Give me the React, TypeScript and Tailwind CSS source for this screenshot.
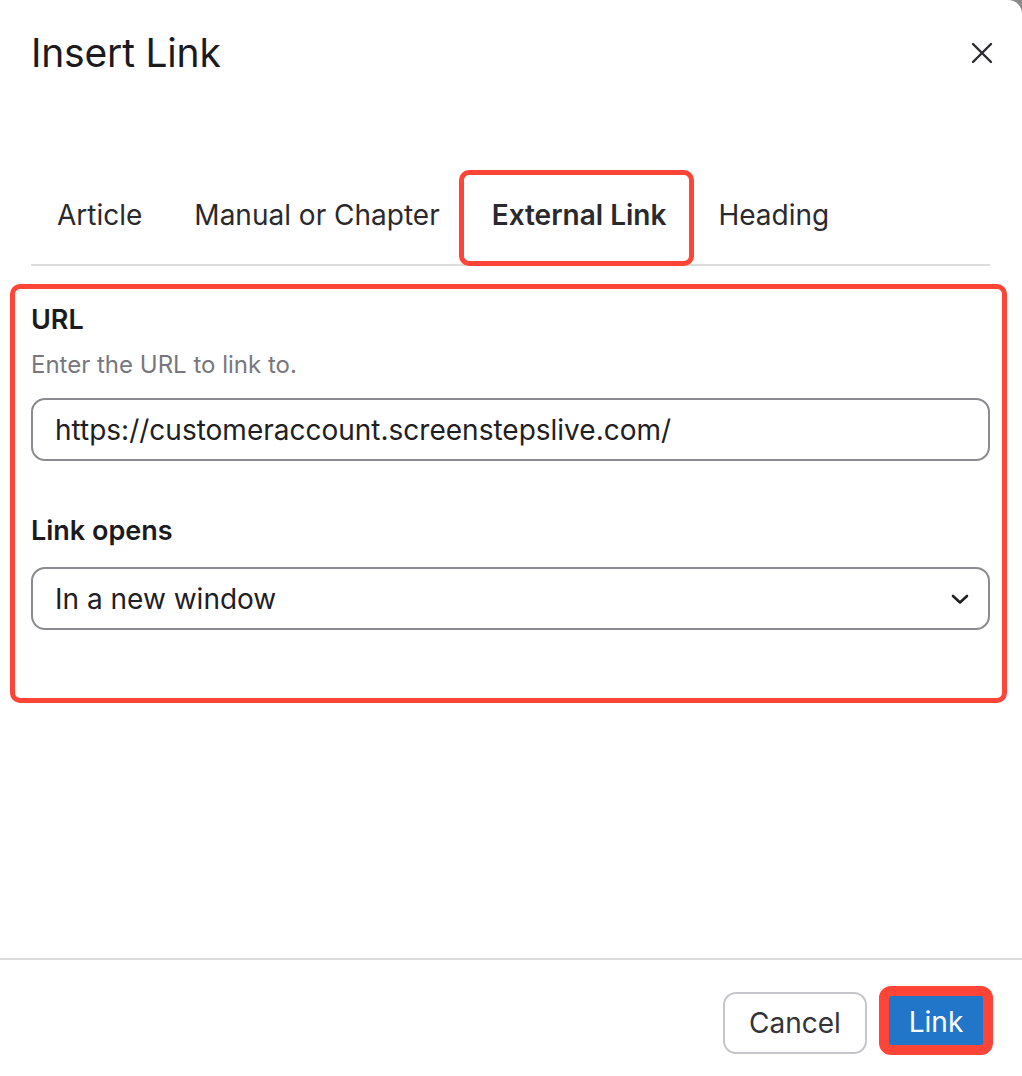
const tabs = ["Article", "Manual or Chapter", "External Link", "Heading"];

export default function App() {
  return (
    <div className="w-[1022px] h-[1076px] bg-[#8c8c8c]" style={{ fontFamily: "Inter, 'Noto Sans', sans-serif" }}>
      <div className="w-full h-full bg-white rounded-tr-[14px] flex flex-col">
        {/* header */}
        <div className="flex items-center justify-between pl-[31px] pr-[28px] pt-[30px] h-[75px]">
          <h2 className="text-[39px] leading-[44px] font-normal text-[#1b1b1f] tracking-[-0.2px]">Insert Link</h2>
          <button type="button" className="w-[24px] h-[24px] flex items-center justify-center text-[#2a2a30]">
            <svg width="22" height="22" viewBox="0 0 22 22" fill="none" stroke="currentColor" strokeWidth="2.4" strokeLinecap="round">
              <path d="M2 2 L20 20 M20 2 L2 20" />
            </svg>
          </button>
        </div>

        {/* tabs */}
        <div className="mt-[95px] ml-[31px] mr-[32px] flex border-b-2 border-[#dcdcdc]">
          {tabs.map((t) => {
            const active = t === "External Link";
            return (
              <div
                key={t}
                className={
                  active
                    ? "relative px-[26px] pt-[29px] pb-[33px] text-[28px] leading-[32px] font-semibold text-[#2a2a2e]"
                    : "relative px-[26px] pt-[29px] pb-[33px] text-[28px] leading-[32px] font-normal text-[#2a2a2e]"
                }
              >
                {t}
                {active && (
                  <div className="absolute left-[-7px] right-[-2px] top-0 bottom-[-2px] border-[5px] border-[#ff4438] rounded-[10px]" />
                )}
              </div>
            );
          })}
        </div>

        {/* panel */}
        <div className="mt-[18px] ml-[10px] w-[997px] h-[419px] border-[5px] border-[#ff4438] rounded-[10px] pl-[16px] pr-[12px] pt-[16px]">
          <label className="block text-[27px] leading-[30px] font-semibold text-[#1a1a1f]">URL</label>
          <p className="mt-[16px] text-[24px] leading-[28px] text-[#77777d]">Enter the URL to link to.</p>
          <div className="mt-[19px] h-[63px] border-2 border-[#8a8a90] rounded-[14px] flex items-center px-[22px] text-[28px] text-[#1f2024]">
            https://customeraccount.screenstepslive.com/
          </div>
          <label className="block mt-[55px] text-[27px] leading-[30px] font-semibold text-[#1a1a1f]">Link opens</label>
          <div className="mt-[21px] h-[63px] border-2 border-[#8a8a90] rounded-[14px] flex items-center justify-between pl-[22px] pr-[19px] text-[28px] text-[#1f2024]">
            <span>In a new window</span>
            <svg width="18" height="12" viewBox="0 0 18 12" fill="none" stroke="#1f2024" strokeWidth="2.6" strokeLinecap="round" strokeLinejoin="round">
              <path d="M2 3 L9 9.5 L16 3" />
            </svg>
          </div>
        </div>

        <div className="flex-1" />

        {/* footer */}
        <div className="border-t-2 border-[#dcdcdc] h-[118px] flex items-start justify-end pr-[29px] pt-[26px]">
          <button
            type="button"
            className="mt-[6px] w-[144px] h-[62px] border-2 border-[#c6c6ca] rounded-[13px] text-[28px] text-[#333338] flex items-center justify-center"
          >
            Cancel
          </button>
          <button
            type="button"
            className="ml-[12px] w-[114px] h-[69px] border-[10px] border-[#ff4438] rounded-[12px] bg-[#2176ca] text-[28px] text-white flex items-center justify-center pt-[2px]"
          >
            Link
          </button>
        </div>
      </div>
    </div>
  );
}
